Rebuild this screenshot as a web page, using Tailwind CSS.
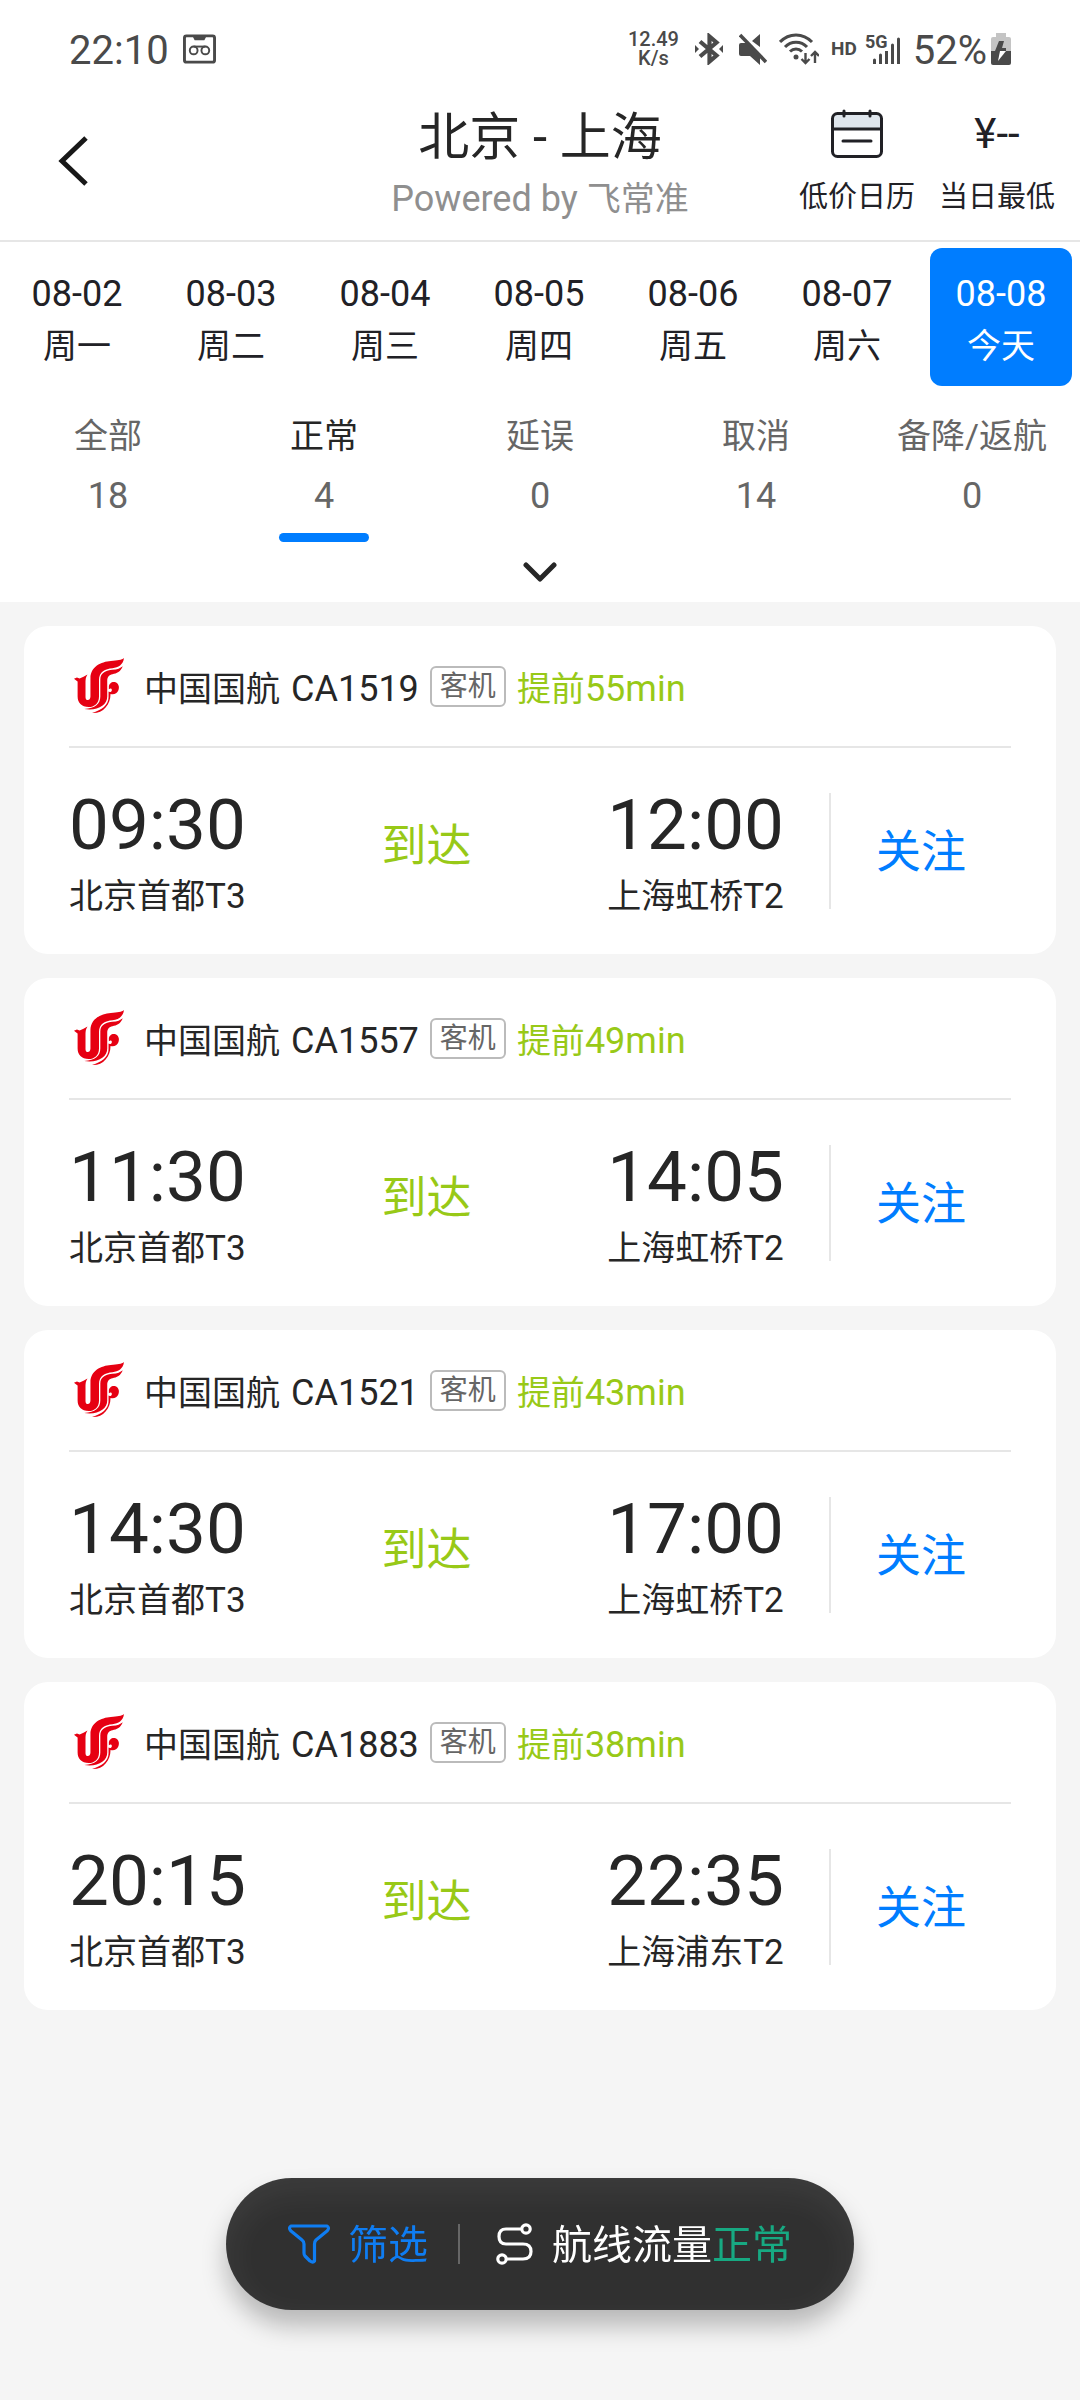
<!DOCTYPE html>
<html lang="zh-CN">
<head>
  <meta charset="UTF-8" />
  <meta name="viewport" content="width=device-width, initial-scale=1" />
  <title>北京 - 上海</title>
  <script src="https://cdn.jsdelivr.net/npm/@tailwindcss/browser@4"></script>
</head>
<body class="min-h-screen bg-[#f5f5f5] font-[Roboto,'Noto_Sans_CJK_SC',sans-serif] text-[#262626]">

  <!-- Airline logo, reused by every card -->
  <svg class="hidden">
    <symbol id="air-china" viewBox="40 48 158 176">
      <g fill="#e60012">
        <path d="M43 114L52 110L60 113C68 110 76 106 84 101C78 110 78 118 78 128V170C78 182 93 182 93 168V112C93 78 125 62 155 60C175 58 188 58 195 51C192 72 178 80 160 82C138 84 119 92 119 118V168C119 190 104 200 88 200C66 200 54 186 54 168V122Z" />
        <path d="M191 76C186 92 172 98 160 100C150 102 144 108 144 120V168C144 195 115 212 74 206C108 204 123 190 123 168V116C123 96 142 88 160 87C175 86 184 82 191 76Z" />
        <path d="M149 138C149 129 158 122 167 124C179 127 182 140 178 149C174 159 163 164 154 160C154 194 130 220 98 218C128 208 148 194 148 170V153C152 156 158 154 158 148C158 144 154 142 149 146Z" />
      </g>
    </symbol>
  </svg>

  <div class="bg-white">
    <!-- Status bar -->
    <div class="flex h-[98px] items-center px-[69px] text-[40px] text-[#4a4a4a]">
      <span class="pt-1">22:10</span>
      <svg class="mx-[14px] h-[30px] w-[33px]" viewBox="0 0 34 30" fill="none" stroke="currentColor">
        <rect x="1.5" y="1.5" width="31" height="27" rx="2" stroke-width="3" />
        <path d="M10 2H24L22 6H12Z" fill="currentColor" stroke="none" />
        <circle cx="11" cy="16.5" r="4" stroke-width="2" />
        <circle cx="23" cy="16.5" r="4" stroke-width="2" />
        <path d="M11 12.5H23" stroke-width="2" />
      </svg>

      <div class="ml-auto flex items-center">
        <div class="mr-4 flex flex-col items-center text-[20px] leading-[19px] font-medium">
          <span>12.49</span>
          <span>K/s</span>
        </div>
        <svg class="mr-4 h-8 w-7" viewBox="0 0 28 32" fill="none" stroke="currentColor" stroke-width="4.2">
          <path d="M5 8.5L21.500 22.500L14.500 28.500V3.500L21.500 9.500L5 23.500" />
          <path d="M0 12L4 16L0 20ZM28 12L24 16L28 20Z" fill="currentColor" stroke="none" />
        </svg>
        <svg class="mr-3 h-8 w-7" viewBox="0 0 28 32" fill="currentColor">
          <path d="M2 10H8L21 24V32L11 23H2Q0 23 0 21V12Q0 10 2 10ZM21 1V14L13 8Z" />
          <path d="M1 2L27 29" fill="none" stroke="currentColor" stroke-width="3.6" />
        </svg>
        <svg class="mr-3 h-8 w-10" viewBox="0 0 40 32" fill="none" stroke="currentColor" stroke-width="3">
          <path d="M1 9C10 -0.500 24 -0.500 33 9" />
          <path d="M6 14C12 7.500 22 7.500 28 14" />
          <path d="M11 18.500C14.500 15 19.500 15 23 18.500" />
          <circle cx="17" cy="24" r="2.500" fill="currentColor" stroke="none" />
          <path d="M26.500 20V30M22.500 26L26.500 30L30.500 26M36 30V19M32 23L36 19L40 23" stroke-width="2.400" />
        </svg>
        <span class="mr-2 text-[19px] font-bold">HD</span>
        <svg class="mr-3 h-8 w-9 overflow-visible" viewBox="0 0 36 32" fill="currentColor">
          <text x="0" y="15" font-size="18" font-weight="700">5G</text>
          <path d="M8 27a1.500 1.500 0 0 1 3 0V31H8ZM14 22a1.500 1.500 0 0 1 3 0V31H14ZM20 18H23V31H20ZM26 12a1.500 1.500 0 0 1 3 0V31H26ZM32 6a1.500 1.500 0 0 1 3 0V31H32Z" />
        </svg>
        <span class="mr-1 pt-1">52%</span>
        <svg class="h-8 w-5" viewBox="0 0 20 32">
          <path d="M5 0H15V4H18Q20 4 20 6V18H0V6Q0 4 2 4H5Z" fill="#c4c4c4" />
          <path d="M0 18H20V30Q20 32 18 32H2Q0 32 0 30Z" fill="#4a4a4a" />
          <path d="M8 8H13L11 15H15V18H4Z" fill="#4a4a4a" />
          <path d="M9 18H15L7 28Z" fill="#fff" />
        </svg>
      </div>
    </div>

    <!-- Header -->
    <header class="grid grid-cols-[1fr_auto_1fr] border-b-2 border-[#e6e6e6] pb-4 text-[#212126]">
      <button aria-label="返回" class="ml-14 self-center justify-self-start">
        <svg class="h-[50px] w-8" viewBox="0 0 32 50" fill="none" stroke="#181818" stroke-width="5">
          <path d="M30 2L6 25L30 48" />
        </svg>
      </button>
      <div class="pt-0.5 text-center">
        <h1 class="text-[51px] leading-[76px] text-[#262626]">北京 - 上海</h1>
        <p class="text-[36px] leading-[46px] text-[#8f8f8f]">Powered by <span class="text-[34px]">飞常准</span></p>
      </div>
      <div class="flex justify-end gap-6 pr-[25px] text-[29px] leading-[54px]">
        <button class="flex flex-col items-center">
          <span class="flex h-[72px] items-center">
            <svg class="h-[50px] w-[52px]" viewBox="0 0 52 50" fill="none" stroke="#212126" stroke-width="3" stroke-linecap="round">
              <path d="M2 20V8Q2 4 6 4H46Q50 4 50 8V20Z" fill="#dfe6ed" stroke="none" />
              <rect x="1.500" y="4.500" width="49" height="43" rx="5" />
              <path d="M2 20H50M12 32H40M13 2V7M39 2V7" />
            </svg>
          </span>
          低价日历
        </button>
        <button class="flex flex-col items-center">
          <span class="text-[42px] leading-[72px]">¥--</span>
          当日最低
        </button>
      </div>
    </header>

    <!-- Dates -->
    <nav id="dates" class="grid grid-cols-7 gap-3 pt-[6px] pr-2 pl-[6px] text-[#212126]"></nav>

    <!-- Status tabs -->
    <div id="tabs" class="grid grid-cols-5 pt-[25px]"></div>
    <div class="flex h-[60px] items-center justify-center">
      <button aria-label="展开">
        <svg class="h-5 w-9" viewBox="0 0 36 20" fill="none" stroke="#262626" stroke-width="5" stroke-linecap="round" stroke-linejoin="round">
          <path d="M4 3L18 17L32 3" />
        </svg>
      </button>
    </div>
  </div>

  <!-- Flights -->
  <main id="flights" class="flex flex-col gap-6 p-6 pb-[240px]"></main>

  <!-- Floating filter bar -->
  <div class="fixed inset-x-0 bottom-[90px] flex justify-center">
    <div class="flex h-[132px] items-center rounded-full bg-[#303030] px-[62px] text-[40px] text-white shadow-[0_16px_24px_rgba(0,0,0,0.25),inset_0_12px_36px_rgba(255,255,255,0.07)]">
      <button class="flex items-center gap-[18px] text-[#0f7df2]">
        <svg class="h-10 w-[42px]" viewBox="0 0 42 40" fill="none" stroke="currentColor" stroke-width="3.2" stroke-linejoin="round">
          <path d="M3 2H39Q42 4 39 7L28 16Q26.500 17.500 26.500 20V37Q25 39 22 37L17 32Q16 31 16 29V20Q16 17.500 14 16L3 7Q0 4 3 2Z" />
        </svg>
        <span class="pt-1">筛选</span>
      </button>
      <span class="mx-[30px] h-10 w-0.5 bg-[#666]"></span>
      <button class="ml-1.5 flex items-center gap-[18px]">
        <svg class="h-[42px] w-[38px]" viewBox="0 0 38 42" fill="none" stroke="currentColor" stroke-width="3.2">
          <circle cx="30" cy="6" r="4.200" />
          <circle cx="6" cy="36" r="4.200" />
          <path d="M26 6H10Q3 6 3 13.500T10 21H27Q35 21 35 28.500T27 36H10" />
        </svg>
        <span class="pt-1">航线流量<span class="text-[#17a982]">正常</span></span>
      </button>
    </div>
  </div>

  <script>
    const dates = [
      ["08-02", "周一"], ["08-03", "周二"], ["08-04", "周三"], ["08-05", "周四"],
      ["08-06", "周五"], ["08-07", "周六"], ["08-08", "今天"]
    ];
    const tabs = [["全部", 18], ["正常", 4], ["延误", 0], ["取消", 14], ["备降/返航", 0]];
    const flights = [
      ["CA1519", 55, "09:30", "12:00", "上海虹桥"],
      ["CA1557", 49, "11:30", "14:05", "上海虹桥"],
      ["CA1521", 43, "14:30", "17:00", "上海虹桥"],
      ["CA1883", 38, "20:15", "22:35", "上海浦东"]
    ];

    document.getElementById("dates").innerHTML = dates.map(([day, week]) => `
      <button class="flex h-[138px] flex-col items-center rounded-xl pt-5 ${week === "今天" ? "bg-[#007dff] text-white" : ""}">
        <span class="text-[36px] leading-[52px]">${day}</span>
        <span class="text-[34px] leading-[52px]">${week}</span>
      </button>`).join("");

    document.getElementById("tabs").innerHTML = tabs.map(([name, count]) => `
      <button class="flex flex-col items-center text-[#666]">
        <span class="text-[34px] leading-[50px] ${name === "正常" ? "text-[#262626]" : ""}">${name}</span>
        <span class="mt-2 text-[36px] leading-[54px]">${count}</span>
        <span class="mt-[10px] h-[9px] w-[90px] rounded-full ${name === "正常" ? "bg-[#007dff]" : ""}"></span>
      </button>`).join("");

    document.getElementById("flights").innerHTML = flights.map(([no, early, dep, arr, city]) => `
      <article class="h-[328px] rounded-3xl bg-white px-[45px]">
        <div class="flex h-[122px] items-center border-b-2 border-[#e6e6e6] text-[36px]">
          <svg class="ml-1 h-[58px] w-[52px]"><use href="#air-china" /></svg>
          <span class="ml-[19px] pt-1.5 text-[34px]">中国国航</span>
          <span class="ml-[11px] pt-1.5">${no}</span>
          <span class="ml-[11px] rounded-md border-2 border-[#bbb] px-2 text-[28px] leading-[37px] text-[#666]">客机</span>
          <span class="ml-[11px] pt-1.5 text-[#98c917]"><span class="text-[34px]">提前</span>${early}min</span>
        </div>
        <div class="flex pt-[45px]">
          <div class="flex flex-1 items-start justify-between pr-[45px]">
            <div>
              <div class="text-[71px] leading-[64px]">${dep}</div>
              <div class="text-[35px] leading-[78px]"><span class="text-[34px]">北京首都</span>T3</div>
            </div>
            <div class="text-[45px] leading-[108px] text-[#98c917]">到达</div>
            <div>
              <div class="text-[71px] leading-[64px]">${arr}</div>
              <div class="text-[35px] leading-[78px]"><span class="text-[34px]">${city}</span>T2</div>
            </div>
          </div>
          <button class="h-[116px] w-[182px] border-l-2 border-[#e6e6e6] pt-1 text-[45px] text-[#007dff]">关注</button>
        </div>
      </article>`).join("");
  </script>
</body>
</html>
